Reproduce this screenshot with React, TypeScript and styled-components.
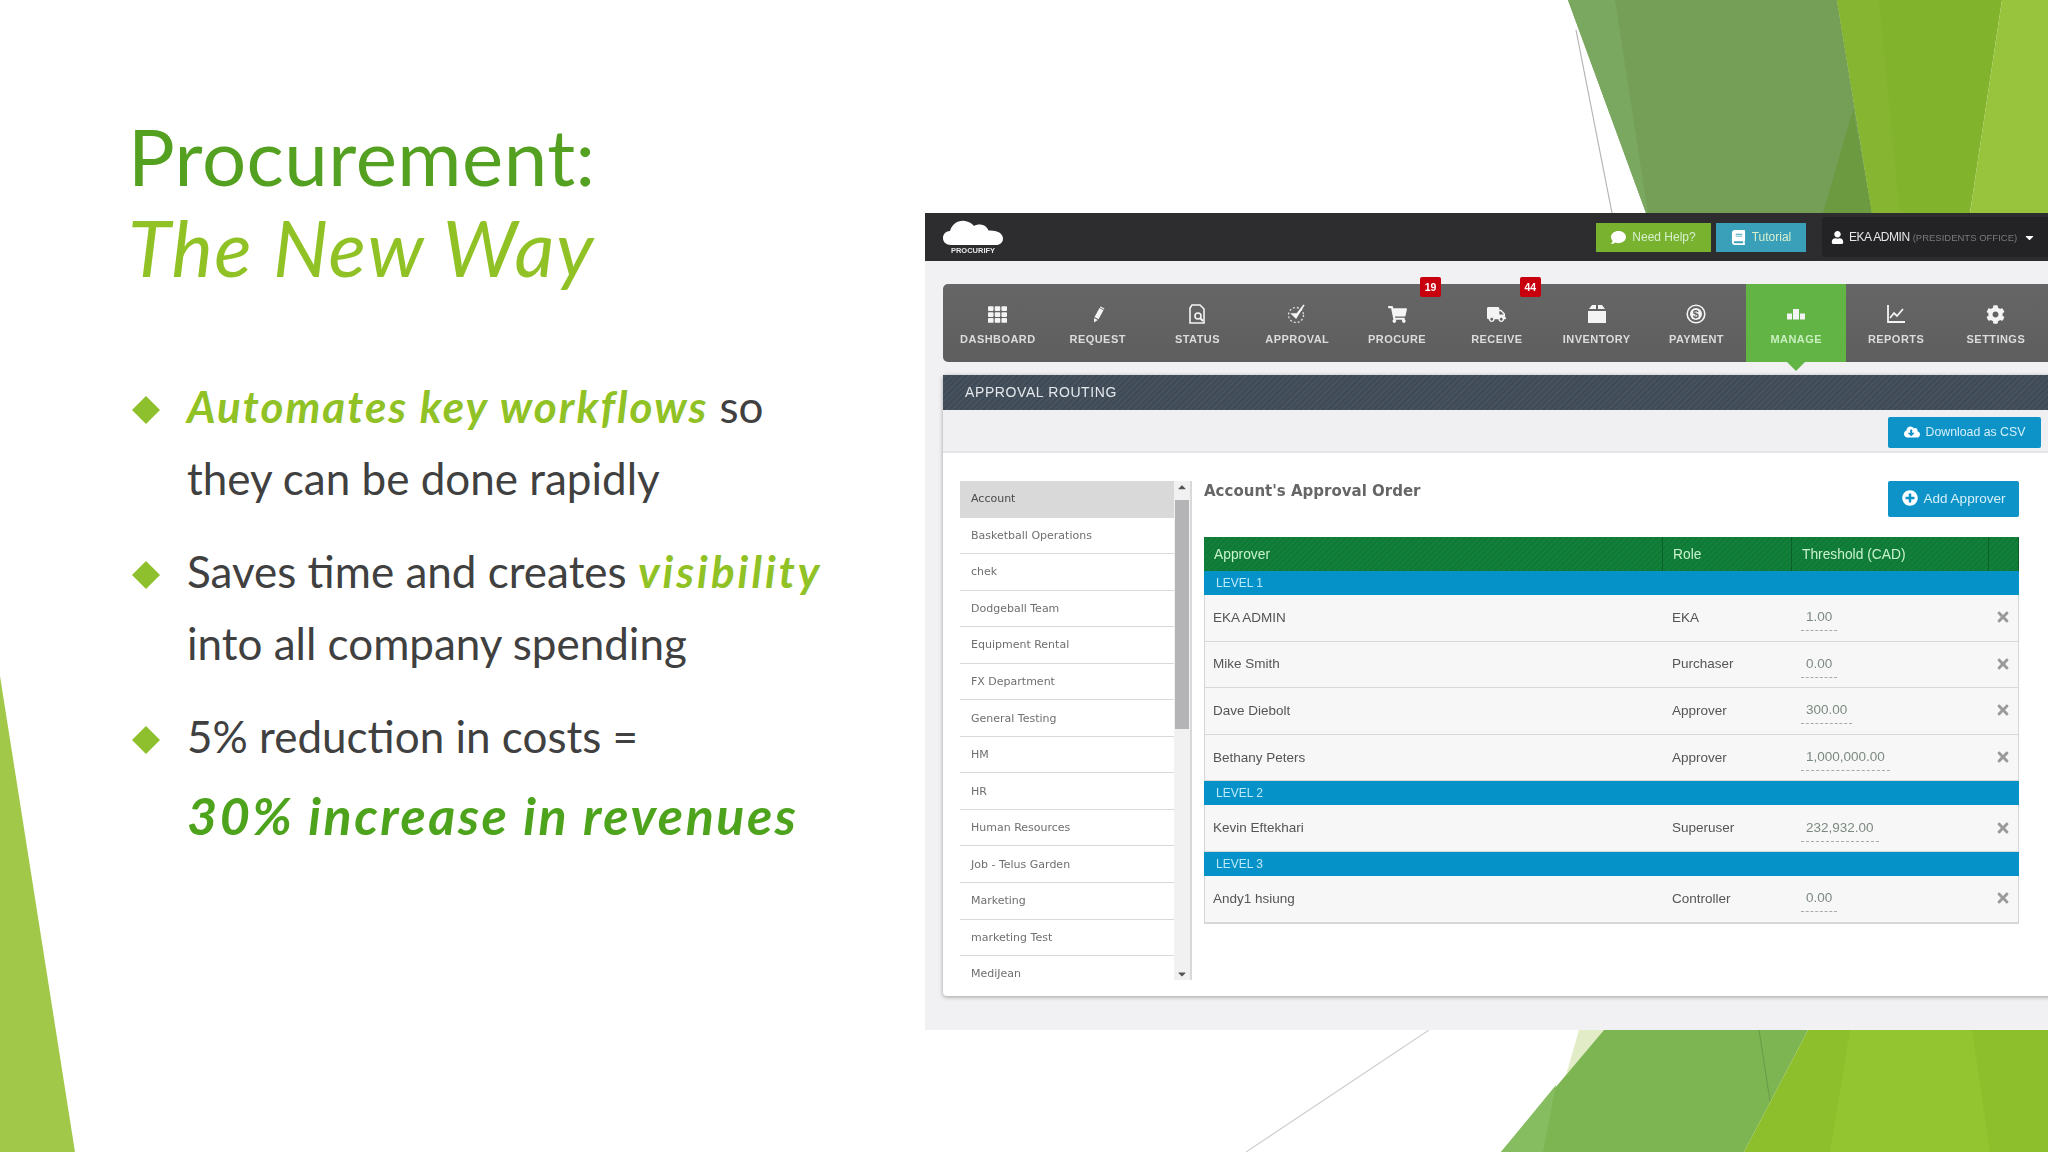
import styled, { createGlobalStyle } from "styled-components";
import {
  FaBook,
  FaCaretDown,
  FaCaretUp,
  FaCloudDownloadAlt,
  FaCog,
  FaComment,
  FaPlusCircle,
  FaShoppingCart,
  FaTh,
  FaTimes,
  FaTruck,
  FaUser,
} from "react-icons/fa";

const GlobalStyle = createGlobalStyle`
  html, body {
    margin: 0;
    padding: 0;
    background: #fff;
  }
`;

const Slide = styled.div`
  position: relative;
  width: 2048px;
  height: 1152px;
  overflow: hidden;
  display: flex;
  background: #fff;
  font-family: "Lato", "Liberation Sans", sans-serif;
`;

const Decor = styled.svg`
  position: absolute;
  inset: 0;
`;

const Left = styled.div`
  position: relative;
  width: 925px;
  flex: none;
  box-sizing: border-box;
  padding: 111px 0 0 132px;
`;

const Title = styled.h1`
  margin: 0 0 77px -4px;
  font-size: 78px;
  line-height: 91px;
  font-weight: 400;
  letter-spacing: 0.5px;
  color: #54a021;
`;

const TitleAccent = styled.div`
  font-style: italic;
  letter-spacing: 1.5px;
  color: #90c226;
`;

const Bullets = styled.ul`
  margin: 0;
  padding: 0;
  list-style: none;
  display: flex;
  flex-direction: column;
  gap: 21px;
`;

const Bullet = styled.li`
  display: grid;
  grid-template-columns: 55px 1fr;
  font-size: 44px;
  line-height: 72px;
  white-space: nowrap;
  color: #404040;
`;

const Diamond = styled.span`
  width: 28px;
  height: 28px;
  margin-top: 26px;
  background: #8dc02c;
  clip-path: polygon(50% 0, 100% 50%, 50% 100%, 0 50%);
`;

const Accent = styled.em<{ $spacing: number }>`
  font-weight: 700;
  letter-spacing: ${({ $spacing }) => $spacing}px;
  color: #90c226;
`;

const BigLine = styled.div`
  margin-top: 7px;
  font-size: 52px;
  font-style: italic;
  font-weight: 700;
  letter-spacing: 2.5px;
  color: #4da31c;
`;

const Window = styled.div`
  position: relative;
  width: 1123px;
  height: 817px;
  margin-top: 213px;
  flex: none;
  overflow: hidden;
  display: flex;
  flex-direction: column;
  background: #f1f1f3;
  font-family: "Liberation Sans", sans-serif;
  filter: blur(0.6px);
`;

const TopBar = styled.div`
  height: 48px;
  flex: none;
  display: flex;
  align-items: center;
  padding-left: 18px;
  background: #2d2c2e;
`;

const Logo = styled.div`
  display: flex;
  flex-direction: column;
  align-items: center;
  width: 60px;
  color: #e8e8e8;
  font-size: 7.5px;
  font-weight: 700;
`;

const HelpButton = styled.div<{ $bg: string; $width: number; $margin?: string }>`
  width: ${({ $width }) => $width}px;
  height: 29px;
  margin: ${({ $margin }) => $margin || "0"};
  display: flex;
  align-items: center;
  justify-content: center;
  gap: 6px;
  background: ${({ $bg }) => $bg};
  color: #d7f0d0;
  font-size: 12px;
  svg {
    color: #fff;
    font-size: 15px;
  }
`;

const UserMenu = styled.div`
  width: 226px;
  height: 40px;
  margin-left: 16px;
  box-sizing: border-box;
  display: flex;
  align-items: center;
  padding-left: 9px;
  border-radius: 4px 0 0 4px;
  background: #232225;
  color: #e6e6e6;
  font-size: 12px;
  white-space: nowrap;
  letter-spacing: -0.45px;
  svg {
    font-size: 13px;
    color: #fff;
  }
`;

const UserName = styled.span`
  margin-left: 5px;
`;

const UserOffice = styled.span`
  margin: 0 6px 0 3px;
  color: #7a7a7a;
  font-size: 9.5px;
  letter-spacing: 0;
`;

const Nav = styled.div`
  flex: none;
  height: 78px;
  margin: 23px 0 0 18px;
  padding-left: 5px;
  display: flex;
  border-radius: 5px 0 0 5px;
  background: linear-gradient(#666666, #5e5e5e);
`;

const NavItem = styled.div<{ $active?: boolean }>`
  position: relative;
  width: 99.8px;
  flex: none;
  display: flex;
  flex-direction: column;
  align-items: center;
  padding-top: 20px;
  box-sizing: border-box;
  background: ${({ $active }) => ($active ? "#62b544" : "transparent")};
  color: ${({ $active }) => ($active ? "#c9efc0" : "#dcdcdc")};
  font-size: 11px;
  font-weight: 700;
  letter-spacing: 0.45px;
`;

const NavIcon = styled.div`
  height: 20px;
  margin-bottom: 9px;
  display: flex;
  align-items: center;
  font-size: 19px;
  color: #f4f4f4;
`;

const Badge = styled.span`
  position: absolute;
  top: -7px;
  right: 6px;
  width: 21px;
  height: 20px;
  display: flex;
  align-items: center;
  justify-content: center;
  border-radius: 2px;
  background: #c8000e;
  color: #fff;
  font-size: 10.5px;
  letter-spacing: 0;
`;

const ActiveArrow = styled.span`
  position: absolute;
  left: 50%;
  bottom: -9px;
  margin-left: -9px;
  border-left: 9px solid transparent;
  border-right: 9px solid transparent;
  border-top: 9px solid #62b544;
`;

const Panel = styled.div`
  width: 1200px;
  height: 621px;
  flex: none;
  margin: 13px 0 0 18px;
  display: flex;
  flex-direction: column;
  background: #fff;
  border-radius: 4px;
  box-shadow: 0 1px 4px rgba(0, 0, 0, 0.35);
`;

const PanelHeader = styled.div`
  height: 35px;
  flex: none;
  box-sizing: border-box;
  display: flex;
  align-items: center;
  padding: 0 0 2px 22px;
  background: repeating-linear-gradient(
    135deg,
    #3f4a55 0 2px,
    #465260 2px 4px
  );
  color: #e4e8ec;
  font-size: 14px;
  letter-spacing: 0.6px;
`;

const Toolbar = styled.div`
  height: 43px;
  flex: none;
  box-sizing: border-box;
  padding: 7px 0 0 945px;
  border-bottom: 2px solid #e4e4e6;
  background: #f0f0f2;
`;

const BlueButton = styled.div<{ $width: number; $height: number; $size: number }>`
  width: ${({ $width }) => $width}px;
  height: ${({ $height }) => $height}px;
  box-sizing: border-box;
  padding-bottom: 2px;
  display: flex;
  align-items: center;
  justify-content: center;
  gap: 6px;
  border-radius: 2px;
  background: #0e93c9;
  color: #d4f0fa;
  font-size: ${({ $size }) => $size}px;
  svg {
    color: #fff;
    font-size: 16px;
  }
`;

const PanelBody = styled.div`
  flex: 1;
  display: flex;
  padding: 28px 0 0 17px;
`;

const AccountColumn = styled.div`
  position: relative;
  width: 232px;
  height: 499px;
  flex: none;
  overflow: hidden;
  border-right: 2px solid #d8d8d8;
  box-sizing: border-box;
`;

const AccountRow = styled.div<{ $active?: boolean }>`
  width: 214px;
  height: 36.55px;
  box-sizing: border-box;
  display: flex;
  align-items: center;
  padding-left: 11px;
  border-bottom: 1px solid #d9d9d9;
  background: ${({ $active }) => ($active ? "#d9d9d9" : "#fff")};
  color: ${({ $active }) => ($active ? "#4a4a4a" : "#6f6f6f")};
  font-family: "DejaVu Sans", sans-serif;
  font-size: 11px;
`;

const ScrollTrack = styled.div`
  position: absolute;
  top: 0;
  right: 0;
  bottom: 0;
  width: 16px;
  display: flex;
  flex-direction: column;
  align-items: center;
  justify-content: space-between;
  background: #f1f1f2;
  color: #555;
  font-size: 12px;
`;

const ScrollThumb = styled.div`
  position: absolute;
  top: 19px;
  left: 1px;
  width: 14px;
  height: 229px;
  background: #b4b4b6;
`;

const Main = styled.div`
  width: 815px;
  flex: none;
  margin-left: 12px;
`;

const MainHeader = styled.div`
  height: 56px;
  display: flex;
  justify-content: space-between;
  align-items: flex-start;
`;

const MainTitle = styled.h2`
  margin: 1px 0 0 0;
  font-family: "DejaVu Sans", sans-serif;
  font-size: 15px;
  font-weight: 700;
  color: #666;
`;

const TableBox = styled.div`
  border: 1px solid #d6d6d6;
  border-top: 0;
  background: #f7f7f8;
`;

const columns = "459px 129px 197px 1fr";

const HeadRow = styled.div`
  height: 34px;
  margin: 0 -1px;
  display: grid;
  grid-template-columns: ${columns};
  background: repeating-linear-gradient(135deg, #0e7a35 0 2px, #12803a 2px 4px);
  color: #c9f2cf;
  font-size: 13.8px;
`;

const HeadCell = styled.div`
  display: flex;
  align-items: center;
  padding-left: 10px;
  border-right: 1px solid #0b5f2b;
`;

const LevelRow = styled.div`
  height: 24px;
  margin: 0 -1px;
  display: flex;
  align-items: center;
  padding-left: 12px;
  background: #0492c8;
  color: #bdeaf8;
  font-size: 12px;
`;

const ApproverRow = styled.div`
  height: 46.6px;
  box-sizing: border-box;
  padding-bottom: 1px;
  display: grid;
  grid-template-columns: ${columns};
  align-items: center;
  border-bottom: 1px solid #d8d8d8;
  color: #555;
  font-size: 13.5px;
`;

const Cell = styled.div`
  padding-left: 8px;
`;

const Threshold = styled.span`
  display: inline-block;
  margin-top: 6px;
  padding: 0 5px 6px 5px;
  border-bottom: 1px dashed #aaa;
  color: #7d8a80;
`;

const RemoveCell = styled.div`
  display: flex;
  justify-content: center;
  padding-right: 2px;
  color: #9a9a9a;
  font-size: 16px;
`;

const NavGlyph = styled.svg`
  width: 20px;
  height: 20px;
  fill: #f4f4f4;
  stroke: none;
`;

const RequestIcon = () => (
  <NavGlyph viewBox="0 0 20 20">
    <path d="M11.5 4l4 2.2-5 9-4-2.2z" />
    <path d="M12.5 2.4l4 2.2-.6 1-4-2.2z" />
    <path d="M6 14l3.8 2.1L6 18.5z" />
  </NavGlyph>
);

const StatusIcon = () => (
  <NavGlyph viewBox="0 0 20 20">
    <path d="M5 1h8l4 4v14H3V4z" fill="none" stroke="#f4f4f4" strokeWidth="1.6" />
    <circle cx="11" cy="12" r="3" fill="none" stroke="#f4f4f4" strokeWidth="1.6" />
    <path d="M13 14l3 3" stroke="#f4f4f4" strokeWidth="2" />
  </NavGlyph>
);

const ApprovalIcon = () => (
  <NavGlyph viewBox="0 0 20 20">
    <circle cx="9" cy="11" r="7.5" fill="none" stroke="#d8d8d8" strokeWidth="1.4" strokeDasharray="2 2" />
    <path d="M5 10l4 4 8-13-7 9z" stroke="#f4f4f4" strokeWidth="1.4" />
  </NavGlyph>
);

const InventoryIcon = () => (
  <NavGlyph viewBox="0 0 20 20">
    <path d="M1 7h18v12H1z" />
    <path d="M2 5l3-4h4v4zM11 5V1h4l3 4z" />
  </NavGlyph>
);

const PaymentIcon = () => (
  <NavGlyph viewBox="0 0 20 20">
    <circle cx="10" cy="10" r="8.8" fill="none" stroke="#f4f4f4" strokeWidth="1.6" />
    <circle cx="10" cy="10" r="6" />
    <text x="10" y="14" textAnchor="middle" fontSize="11" fontWeight="700" fill="#616161">$</text>
  </NavGlyph>
);

const ManageIcon = () => (
  <NavGlyph viewBox="0 0 20 20">
    <path d="M1 9.5h5v6H1zM7 5h6v10.5H7zM14 9.5h5v6h-5z" />
  </NavGlyph>
);

const ReportsIcon = () => (
  <NavGlyph viewBox="0 0 20 20">
    <path d="M2 1v17h17" fill="none" stroke="#f4f4f4" strokeWidth="1.8" />
    <path d="M4 14l4-5 3 3 6-7" fill="none" stroke="#f4f4f4" strokeWidth="1.8" />
  </NavGlyph>
);

const navItems = [
  { label: "DASHBOARD", icon: <FaTh /> },
  { label: "REQUEST", icon: <RequestIcon /> },
  { label: "STATUS", icon: <StatusIcon /> },
  { label: "APPROVAL", icon: <ApprovalIcon /> },
  { label: "PROCURE", icon: <FaShoppingCart />, badge: "19" },
  { label: "RECEIVE", icon: <FaTruck />, badge: "44" },
  { label: "INVENTORY", icon: <InventoryIcon /> },
  { label: "PAYMENT", icon: <PaymentIcon /> },
  { label: "MANAGE", icon: <ManageIcon />, active: true },
  { label: "REPORTS", icon: <ReportsIcon /> },
  { label: "SETTINGS", icon: <FaCog /> },
];

const accounts = [
  "Account",
  "Basketball Operations",
  "chek",
  "Dodgeball Team",
  "Equipment Rental",
  "FX Department",
  "General Testing",
  "HM",
  "HR",
  "Human Resources",
  "Job - Telus Garden",
  "Marketing",
  "marketing Test",
  "MediJean",
];

const levels = [
  {
    name: "LEVEL 1",
    rows: [
      ["EKA ADMIN", "EKA", "1.00"],
      ["Mike Smith", "Purchaser", "0.00"],
      ["Dave Diebolt", "Approver", "300.00"],
      ["Bethany Peters", "Approver", "1,000,000.00"],
    ],
  },
  { name: "LEVEL 2", rows: [["Kevin Eftekhari", "Superuser", "232,932.00"]] },
  { name: "LEVEL 3", rows: [["Andy1 hsiung", "Controller", "0.00"]] },
];

const CloudLogo = () => (
  <svg width="60" height="26" viewBox="0 0 60 26">
    <path
      d="M8 25C3 25 0 22 0 18c0-4 3-7 7-7 2-7 8-11 15-10 4 .5 7 2.500 9 5 3-2 8-2 11 0 2 1.500 3 3 3.500 4.500 8-.5 14.500 2.500 14.500 8 0 4-3 6.500-7 6.500z"
      fill="#fff"
    />
  </svg>
);

export default function App() {
  return (
    <Slide>
      <GlobalStyle />
      <Decor width="2048" height="1152" viewBox="0 0 2048 1152">
        <polygon points="1568,0 1837,0 1872,213 1646,213" fill="#759e56" />
        <polygon points="1568,0 1615,0 1648,213 1646,213" fill="#7ba860" />
        <polygon points="1823,213 1853,110 1872,213" fill="#6b9a40" />
        <polygon points="1837,0 2002,0 1970,213 1872,213" fill="#82b32d" />
        <polygon points="1837,0 1879,0 1900,213 1872,213" fill="#85b531" />
        <polygon points="2002,0 2048,0 2048,213 1970,213" fill="#97c43c" />
        <line x1="1576" y1="30" x2="1612" y2="213" stroke="#b5b5b5" strokeWidth="1.2" />
        <polygon points="0,676 75,1152 0,1152" fill="#a2c84a" />
        <polygon points="1579,1030 1604,1030 1566,1075" fill="#e2ecc6" />
        <polygon points="1604,1030 1808,1030 1744,1152 1501,1152" fill="#7db552" />
        <polygon points="1501,1152 1543,1152 1556,1085" fill="#85bd60" />
        <polygon points="1808,1030 2048,1030 2048,1152 1744,1152" fill="#8dbe2c" />
        <polygon points="1850,1030 1972,1030 1990,1152 1830,1152" fill="#93c531" />
        <line x1="1759" y1="1030" x2="1770" y2="1101" stroke="#6b9a48" strokeWidth="1" />
        <line x1="1429" y1="1030" x2="1246" y2="1152" stroke="#d0d0d0" strokeWidth="1.2" />
      </Decor>

      <Left>
        <Title>
          Procurement:
          <TitleAccent>The New Way</TitleAccent>
        </Title>
        <Bullets>
          <Bullet>
            <Diamond />
            <div>
              <Accent $spacing={2}>Automates key workflows</Accent> so
              <br />
              they can be done rapidly
            </div>
          </Bullet>
          <Bullet>
            <Diamond />
            <div>
              Saves time and creates <Accent $spacing={3}>visibility</Accent>
              <br />
              into all company spending
            </div>
          </Bullet>
          <Bullet>
            <Diamond />
            <div>
              5% reduction in costs =<BigLine>30% increase in revenues</BigLine>
            </div>
          </Bullet>
        </Bullets>
      </Left>

      <Window>
        <TopBar>
          <Logo>
            <CloudLogo />
            PROCURIFY
          </Logo>
          <HelpButton $bg="#79b22e" $width={115} $margin="0 5px 0 593px">
            <FaComment />
            Need Help?
          </HelpButton>
          <HelpButton $bg="#3a9fb9" $width={90}>
            <FaBook />
            Tutorial
          </HelpButton>
          <UserMenu>
            <FaUser />
            <UserName>EKA ADMIN</UserName>
            <UserOffice>(PRESIDENTS OFFICE)</UserOffice>
            <FaCaretDown />
          </UserMenu>
        </TopBar>

        <Nav>
          {navItems.map((item) => (
            <NavItem key={item.label} $active={item.active}>
              <NavIcon>{item.icon}</NavIcon>
              {item.label}
              {item.badge && <Badge>{item.badge}</Badge>}
              {item.active && <ActiveArrow />}
            </NavItem>
          ))}
        </Nav>

        <Panel>
          <PanelHeader>APPROVAL ROUTING</PanelHeader>
          <Toolbar>
            <BlueButton $width={153} $height={31} $size={12.3}>
              <FaCloudDownloadAlt />
              Download as CSV
            </BlueButton>
          </Toolbar>
          <PanelBody>
            <AccountColumn>
              {accounts.map((name, i) => (
                <AccountRow key={name} $active={i === 0}>
                  {name}
                </AccountRow>
              ))}
              <ScrollTrack>
                <FaCaretUp />
                <ScrollThumb />
                <FaCaretDown />
              </ScrollTrack>
            </AccountColumn>
            <Main>
              <MainHeader>
                <MainTitle>Account's Approval Order</MainTitle>
                <BlueButton $width={131} $height={36} $size={13.5}>
                  <FaPlusCircle />
                  Add Approver
                </BlueButton>
              </MainHeader>
              <TableBox>
                <HeadRow>
                  <HeadCell>Approver</HeadCell>
                  <HeadCell>Role</HeadCell>
                  <HeadCell>Threshold (CAD)</HeadCell>
                  <HeadCell />
                </HeadRow>
                {levels.map((level) => (
                  <div key={level.name}>
                    <LevelRow>{level.name}</LevelRow>
                    {level.rows.map(([name, role, amount]) => (
                      <ApproverRow key={name}>
                        <Cell>{name}</Cell>
                        <Cell>{role}</Cell>
                        <Cell>
                          <Threshold>{amount}</Threshold>
                        </Cell>
                        <RemoveCell>
                          <FaTimes />
                        </RemoveCell>
                      </ApproverRow>
                    ))}
                  </div>
                ))}
              </TableBox>
            </Main>
          </PanelBody>
        </Panel>
      </Window>
    </Slide>
  );
}
